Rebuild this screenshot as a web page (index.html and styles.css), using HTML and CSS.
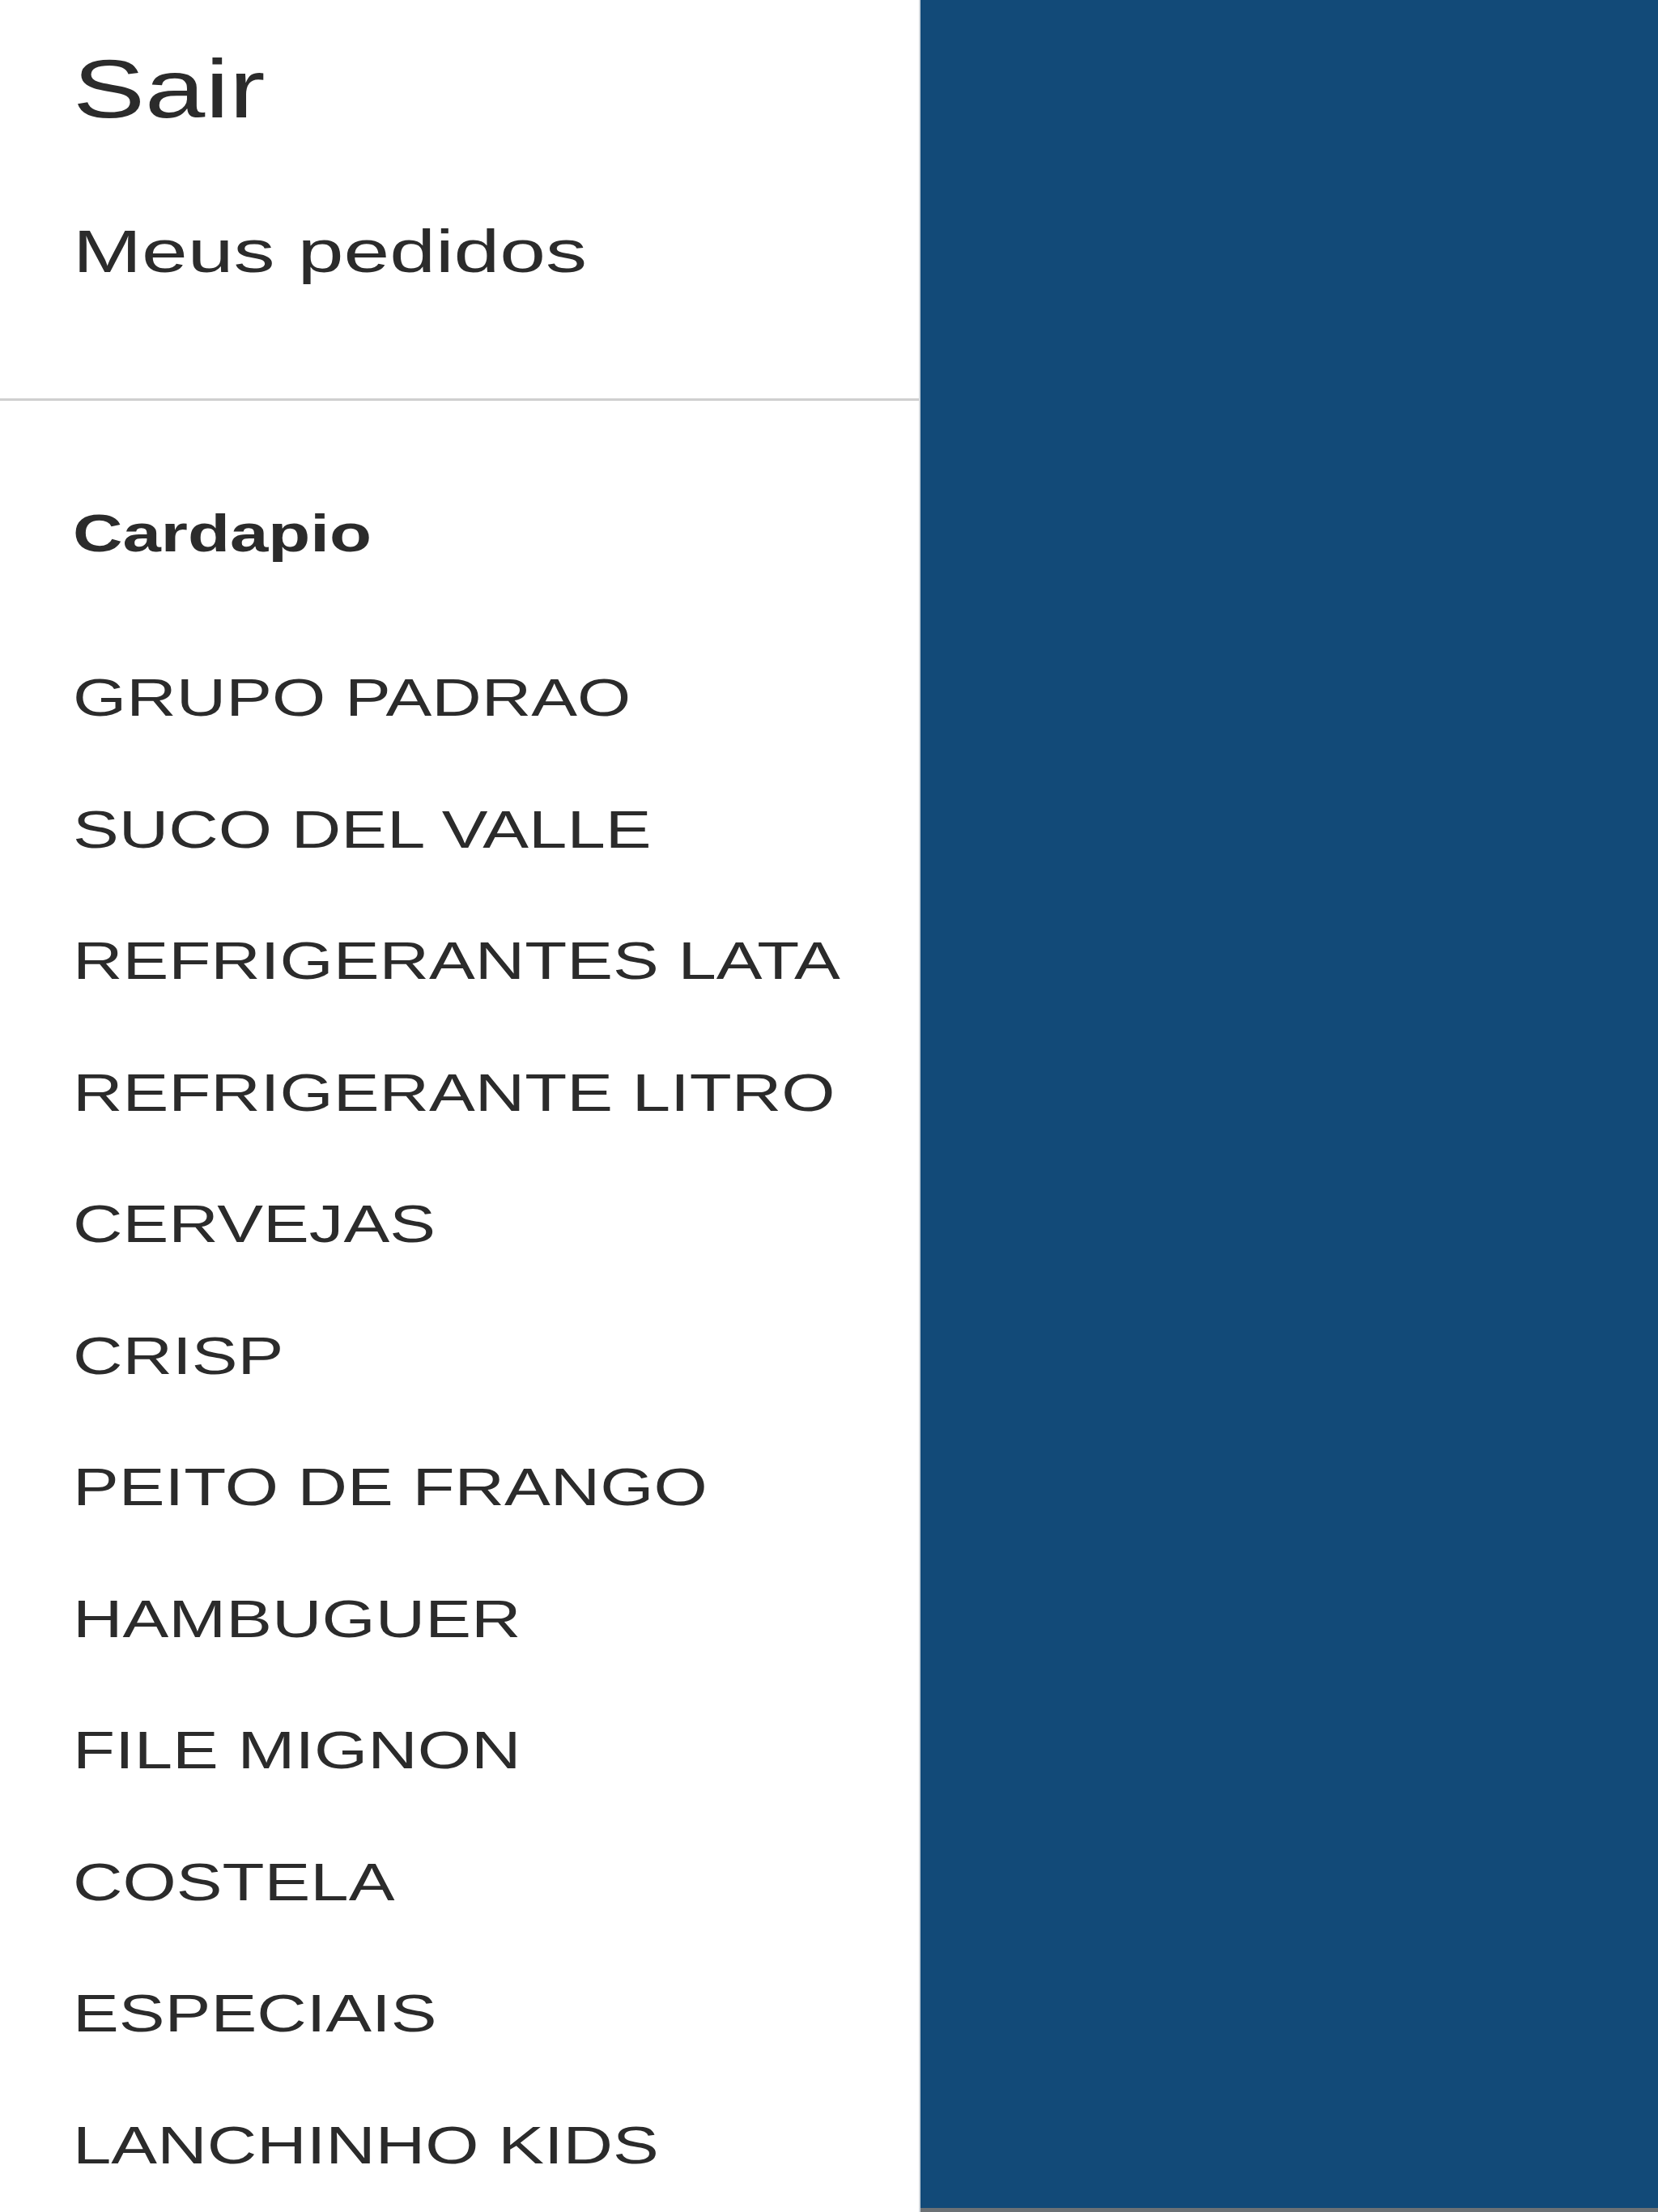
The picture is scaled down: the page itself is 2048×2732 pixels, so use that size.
FILE: index.html
```html
<!DOCTYPE html>
<html lang="pt-BR">
<head>
    <meta charset="UTF-8">
    <meta name="viewport" content="width=device-width, initial-scale=1.0">
    <title>Cardapio</title>
    <link rel="stylesheet" href="styles.css">
</head>
<body>
    <div class="page">

        <!-- Menu lateral -->
        <nav class="drawer">
            <div class="account">
                <a href="#" class="link-sair"><span>Sair</span></a>
                <a href="#" class="link-pedidos"><span>Meus pedidos</span></a>
            </div>

            <hr class="divider">

            <h2 class="menu-title"><span>Cardapio</span></h2>

            <ul class="menu-list">
                <li><a href="#"><span>GRUPO PADRAO</span></a></li>
                <li><a href="#"><span>SUCO DEL VALLE</span></a></li>
                <li><a href="#"><span>REFRIGERANTES LATA</span></a></li>
                <li><a href="#"><span>REFRIGERANTE LITRO</span></a></li>
                <li><a href="#"><span>CERVEJAS</span></a></li>
                <li><a href="#"><span>CRISP</span></a></li>
                <li><a href="#"><span>PEITO DE FRANGO</span></a></li>
                <li><a href="#"><span>HAMBUGUER</span></a></li>
                <li><a href="#"><span>FILE MIGNON</span></a></li>
                <li><a href="#"><span>COSTELA</span></a></li>
                <li><a href="#"><span>ESPECIAIS</span></a></li>
                <li><a href="#"><span>LANCHINHO KIDS</span></a></li>
            </ul>
        </nav>

        <!-- Area principal (coberta pelo menu) -->
        <main class="content"></main>
    </div>
</body>
</html>
```

FILE: styles.css
```css
html, body {
    margin: 0;
    padding: 0;
    height: 100%;
    overflow: hidden;
}
body {
    font-family: "Liberation Sans", Arial, sans-serif;
    color: #2b2b2b;
    background-color: #ffffff;
}
.page {
    display: flex;
    height: 100vh;
}
.drawer {
    width: 1137px;
    box-sizing: border-box;
    flex-shrink: 0;
    background: #ffffff;
    border-right: 2px solid #d3d9df; /* thin edge against the blue */
}
.content {
    flex: 1;
    background-color: #124a78;
    border-bottom: 5px solid #6b7175;
}

/* the screenshot text is wider than the font, stretch it */
.drawer span {
    display: inline-block;
    transform: scaleX(1.31);
    transform-origin: left center;
    white-space: nowrap;
}
.drawer a {
    color: inherit;
    text-decoration: none;
}

.account {
    padding: 49px 0 0 90px;
}
.link-sair {
    display: block;
    font-size: 102px;
    line-height: 122px;
    color: #1e1e1e;
}
.link-pedidos {
    display: block;
    margin-top: 94px;
    font-size: 75px;
    line-height: 90px;
    color: #3a3a3a;
}
.link-pedidos span {
    transform: scaleX(1.36);
}

.divider {
    margin: 137px 0 0 0;
    border: none;
    height: 3px;
    background: #cfcfcf;
}

.menu-title {
    margin: 125px 0 0 0;
    padding-left: 90px;
    font-size: 65px;
    line-height: 78px;
    font-weight: bold;
    color: #2b2b2b;
}
.menu-title span {
    transform: scaleX(1.31);
}

.menu-list {
    list-style: none;
    margin: 83px 0 0 0;
    padding: 0 0 0 90px;
}
.menu-list li {
    height: 162.5px;
    font-size: 65px;
    line-height: 162.5px;
    color: #2b2b2b;
}
```
